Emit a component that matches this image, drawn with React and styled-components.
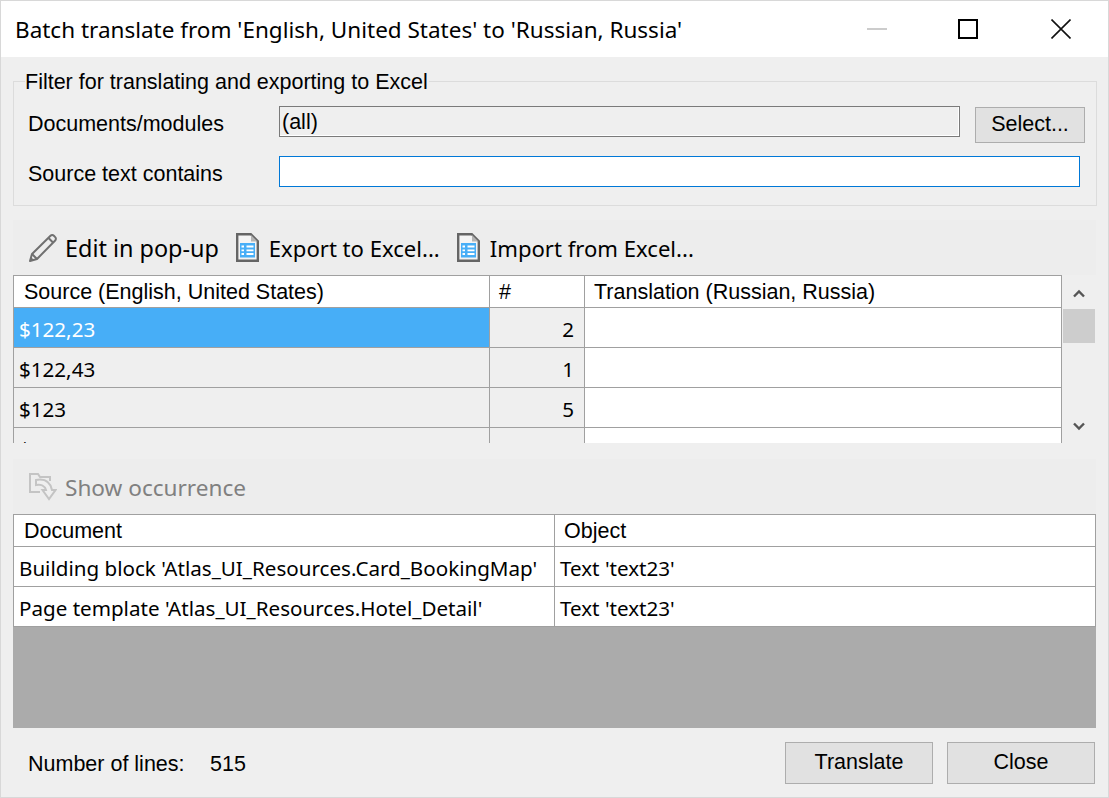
import React from 'react';
import styled, { createGlobalStyle } from 'styled-components';

const GlobalStyle = createGlobalStyle`
  html, body { margin: 0; padding: 0; background: #efefef; }
  * { box-sizing: border-box; }
`

const Window = styled.div`
  display: flex;
  flex-direction: column;
  width: 1109px;
  height: 798px;
  overflow: hidden;
  background: #efefef;
  border: 1px solid #d8d8d8;
  font-family: "Liberation Sans", Arial, sans-serif;
  font-size: 21.5px;
  color: #000;
`
const TitleBar = styled.div`
  display: flex;
  align-items: center;
  flex: none;
  height: 56px;
  padding-left: 14px;
  background: #fff;
  font-family: "Noto Sans", "Open Sans", sans-serif;
  font-size: 22.5px;
`
const TitleText = styled.div`
  flex: 1;
  white-space: nowrap;
`
const WindowButton = styled.div`
  display: flex;
  align-items: center;
  justify-content: center;
  width: 46px;
  margin-right: ${props => props.$gap || 0}px;
  svg { display: block; }
`
const Content = styled.div`
  display: flex;
  flex-direction: column;
  flex: 1;
  padding: 13px 12px 0 12px;
`
const FilterBox = styled.fieldset`
  display: block;
  flex: none;
  width: 1084px;
  height: 136px;
  margin: 0;
  padding: 14px 15px 0 15px;
  border: 1px solid #dcdcdc;
  legend {
    height: 22px;
    margin-left: -4px;
    padding: 0 1px 0 0;
    line-height: 24px;
    white-space: nowrap;
  }
`
const FilterGrid = styled.div`
  display: grid;
  grid-template-columns: 250px 681px 110px;
  grid-template-rows: 31px 31px;
  row-gap: 19px;
  align-items: center;
`
const FilterLabel = styled.div`
  margin-left: -1px;
  padding-top: 5px;
  white-space: nowrap;
`
const ReadOnlyField = styled.div`
  display: flex;
  align-items: center;
  height: 31px;
  padding: 2px 0 0 2px;
  background: #efefef;
  border: 1px solid #7a7a7a;
  box-shadow: inset -1px -1px 0 #fff;
`
const SelectButton = styled.button`
  align-self: start;
  width: 110px;
  height: 36px;
  margin: 1px 0 0 15px;
  padding: 0 0 2px 0;
  border: 1px solid #adadad;
  background: #e1e1e1;
  font: inherit;
  color: #000;
`
const SearchInput = styled.input`
  grid-column: 2 / 4;
  width: 801px;
  height: 31px;
  border: 1px solid #0078d7;
  background: #fff;
  outline: none;
`
const Toolbar = styled.div`
  display: flex;
  align-items: center;
  flex: none;
  height: 55px;
  margin-top: ${props => props.$top}px;
  padding-left: 16px;
  background: #ededed;
  font-family: "Noto Sans", "Open Sans", sans-serif;
  color: ${props => props.$disabled ? '#808080' : '#000'};
`
const ToolItem = styled.div`
  display: flex;
  align-items: center;
  gap: ${props => props.$gap}px;
  margin-right: 17px;
  font-size: ${props => props.$size}px;
  white-space: nowrap;
  svg { display: block; flex: none; }
`
const ToolLabel = styled.span`
  padding-top: ${props => props.$drop || 0}px;
`
const TableArea = styled.div`
  display: flex;
  flex: none;
  height: ${props => props.$height}px;
  overflow: hidden;
`
const Table = styled.div`
  flex: none;
  display: grid;
  align-content: start;
  width: ${props => props.$width}px;
  grid-template-columns: ${props => props.$columns};
  border-left: 1px solid #a0a0a0;
  border-right: 1px solid #a0a0a0;
`
const HeadCell = styled.div`
  display: flex;
  align-items: center;
  height: 33px;
  padding: 2px 0 0 ${props => props.$first ? 10 : 9}px;
  background: #fff;
  border-top: 1px solid #a0a0a0;
  border-bottom: 1px solid #a0a0a0;
  border-right: ${props => props.$last ? 'none' : '1px solid #a0a0a0'};
  white-space: nowrap;
`
const Cell = styled.div`
  display: flex;
  align-items: center;
  justify-content: ${props => props.$right ? 'flex-end' : 'flex-start'};
  height: 40px;
  padding: ${props => props.$right ? '2px 10px 0 0' : '2px 0 0 5px'};
  border-bottom: 1px solid #a0a0a0;
  border-right: ${props => props.$last ? 'none' : '1px solid #a0a0a0'};
  background: ${props => props.$bg};
  color: ${props => props.$selected ? '#fff' : '#000'};
  font-family: "Noto Sans", "Open Sans", sans-serif;
  font-size: 20.6px;
  white-space: nowrap;
`
const ScrollBar = styled.div`
  display: flex;
  flex-direction: column;
  align-items: center;
  flex: none;
  width: 32px;
  margin-left: 1px;
  svg { display: block; }
`
const ScrollArrow = styled.div`
  display: flex;
  align-items: center;
  justify-content: center;
  width: 100%;
  height: 34px;
  padding-top: ${props => props.$pad || 0}px;
`
const ScrollThumb = styled.div`
  width: 32px;
  height: 34px;
  background: #cdcdcd;
`
const ScrollTrack = styled.div`
  flex: 1;
`
const EmptyArea = styled.div`
  flex: none;
  width: 1083px;
  height: 101px;
  background: #ababab;
`
const Footer = styled.div`
  display: flex;
  align-items: center;
  flex: 1;
  padding: 0 1px 0 15px;
`
const LineLabel = styled.div`
  width: 182px;
  padding-top: 3px;
  white-space: nowrap;
`
const LineCount = styled.div`
  flex: 1;
  padding-top: 3px;
`
const FooterButton = styled.button`
  width: 148px;
  height: 42px;
  margin-left: ${props => props.$left || 0}px;
  padding: 0;
  border: 1px solid #adadad;
  background: #e1e1e1;
  font: inherit;
  color: #000;
`

const PencilIcon = () => (
  <svg width="28" height="28" viewBox="0 0 28 28" fill="none" stroke="#707070" strokeWidth="2">
    <path d="M1 27l2-7L21.5 1.8a2.4 2.4 0 0 1 3.4 0l1.3 1.3a2.4 2.4 0 0 1 0 3.4L8 25z" strokeLinejoin="round" />
    <path d="M3 20l5 5M19.5 4l4.5 4.5" />
    <path d="M1 27l1-4 3 3z" fill="#707070" stroke="none" />
  </svg>
)

const SheetIcon = () => (
  <svg width="23" height="29" viewBox="0 0 23 29" fill="none">
    <path d="M1.2 1.2h13.6l7 7v19.6H1.2z" fill="#f4f4f4" stroke="#656565" strokeWidth="2.4" />
    <path d="M15 2v6.5h6.5z" fill="#b4b4b4" />
    <path d="M4 10h15v14.5H4z" fill="#47aef7" />
    <path d="M5.5 13.5h2.5M10.5 13.5h7M5.5 17.3h2.5M10.5 17.3h7M5.5 21h2.5M10.5 21h7" stroke="#fff" strokeWidth="1.8" />
  </svg>
)

const OccurrenceIcon = () => (
  <svg width="28" height="28" viewBox="0 0 28 28" fill="none" stroke="#c4c4c4" strokeWidth="2">
    <path d="M11 19H1V1h8l2 3h10v4" />
    <path d="M7 7c8-1.5 14 1 16 10h3.5l-6.5 9-6.5-9H17c-1-4-5-6-10-5z" fill="#efefef" />
  </svg>
)

const Chevron = ({ down }) => (
  <svg width="12" height="9" viewBox="0 0 12 9" fill="none" stroke="#555" strokeWidth="2.4">
    <path d={down ? 'M1 1.5l5 5 5-5' : 'M1 7.5l5-5 5 5'} />
  </svg>
)

const sourceRows = [
  ['$122,23', '2', true],
  ['$122,43', '1'],
  ['$123', '5'],
  ['$123,00', '3'],
]

const occurrenceRows = [
  ["Building block 'Atlas_UI_Resources.Card_BookingMap'", "Text 'text23'"],
  ["Page template 'Atlas_UI_Resources.Hotel_Detail'", "Text 'text23'"],
]

export default function App() {
  return (
    <Window>
      <GlobalStyle />
      <TitleBar>
        <TitleText>Batch translate from 'English, United States' to 'Russian, Russia'</TitleText>
        <WindowButton $gap={45}>
          <svg width="20" height="2"><rect width="20" height="2" fill="#cccccc" /></svg>
        </WindowButton>
        <WindowButton $gap={47}>
          <svg width="20" height="20" fill="none" stroke="#000" strokeWidth="2"><rect x="1" y="1" width="18" height="18" /></svg>
        </WindowButton>
        <WindowButton $gap={24}>
          <svg width="20" height="20" fill="none" stroke="#111" strokeWidth="1.6"><path d="M0.5 0.5l19 19M19.5 0.5l-19 19" /></svg>
        </WindowButton>
      </TitleBar>
      <Content>
        <FilterBox>
          <legend>Filter for translating and exporting to Excel</legend>
          <FilterGrid>
            <FilterLabel>Documents/modules</FilterLabel>
            <ReadOnlyField>(all)</ReadOnlyField>
            <SelectButton>Select...</SelectButton>
            <FilterLabel>Source text contains</FilterLabel>
            <SearchInput />
          </FilterGrid>
        </FilterBox>
        <Toolbar $top={14}>
          <ToolItem $gap={8} $size={23.4}><PencilIcon /><ToolLabel>Edit in pop-up</ToolLabel></ToolItem>
          <ToolItem $gap={10} $size={22.1}><SheetIcon /><ToolLabel>Export to Excel...</ToolLabel></ToolItem>
          <ToolItem $gap={10} $size={22.1}><SheetIcon /><ToolLabel>Import from Excel...</ToolLabel></ToolItem>
        </Toolbar>
        <TableArea $height={168}>
          <Table $width={1049} $columns="476px 95px 476px">
            <HeadCell $first>Source (English, United States)</HeadCell>
            <HeadCell>#</HeadCell>
            <HeadCell $last>Translation (Russian, Russia)</HeadCell>
            {sourceRows.map(([text, count, selected]) => (
              <React.Fragment key={text}>
                <Cell $bg={selected ? '#47aef7' : '#efefef'} $selected={selected}>{text}</Cell>
                <Cell $bg="#efefef" $right>{count}</Cell>
                <Cell $bg="#fff" $last />
              </React.Fragment>
            ))}
          </Table>
          <ScrollBar>
            <ScrollArrow $pad={3}><Chevron /></ScrollArrow>
            <ScrollThumb />
            <ScrollTrack />
            <ScrollArrow><Chevron down /></ScrollArrow>
          </ScrollBar>
        </TableArea>
        <Toolbar $top={16} $disabled>
          <ToolItem $gap={8} $size={22.6}><OccurrenceIcon /><ToolLabel $drop={2}>Show occurrence</ToolLabel></ToolItem>
        </Toolbar>
        <TableArea $height={113}>
          <Table $width={1083} $columns="541px 540px">
            <HeadCell $first>Document</HeadCell>
            <HeadCell $last>Object</HeadCell>
            {occurrenceRows.map(([doc, obj]) => (
              <React.Fragment key={doc}>
                <Cell $bg="#fff">{doc}</Cell>
                <Cell $bg="#fff" $last>{obj}</Cell>
              </React.Fragment>
            ))}
          </Table>
        </TableArea>
        <EmptyArea />
        <Footer>
          <LineLabel>Number of lines:</LineLabel>
          <LineCount>515</LineCount>
          <FooterButton>Translate</FooterButton>
          <FooterButton $left={14}>Close</FooterButton>
        </Footer>
      </Content>
    </Window>
  )
}
